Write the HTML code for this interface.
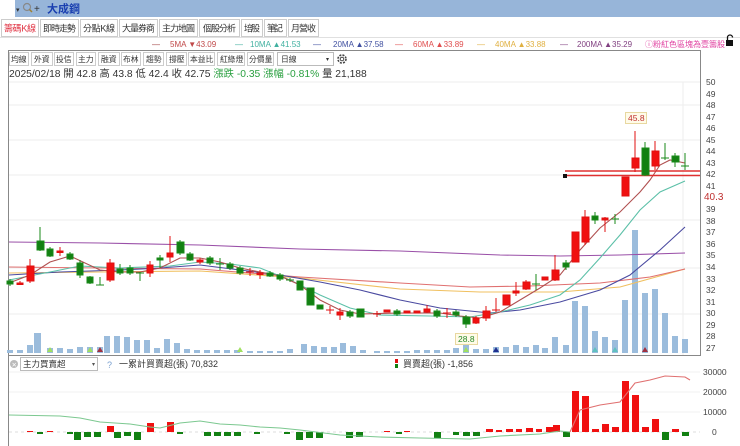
<!DOCTYPE html>
<html><head><meta charset="utf-8"><style>
html,body{margin:0;padding:0;background:#fff;width:740px;height:446px;overflow:hidden}
svg{display:block;font-family:"Liberation Sans","Noto Sans CJK TC",sans-serif}
</style></head><body>
<svg width="740" height="446" viewBox="0 0 740 446" xmlns="http://www.w3.org/2000/svg">
<rect x="0" y="0" width="740" height="17" fill="#97b5d9"/>
<rect x="0" y="0" width="15" height="17" fill="#fff"/>
<text x="16" y="12" font-size="7" fill="#333">▾</text>
<circle cx="27" cy="7" r="3.5" fill="none" stroke="#888" stroke-width="1.2"/>
<line x1="29.5" y1="9.5" x2="32" y2="12" stroke="#a08030" stroke-width="1.5"/>
<text x="34" y="12" font-size="10" fill="#333">+</text>
<text x="47" y="12.5" font-size="11" font-weight="bold" fill="#1a3fb0">大成鋼</text>
<g font-size="9" fill="#333">
<rect x="1.5" y="19.5" width="37" height="17" fill="#fff" stroke="#ccc"/><text x="4" y="31.5" fill="#e03040" textLength="32">籌碼K線</text>
<rect x="40.5" y="19.5" width="38" height="17" fill="#fff" stroke="#ccc"/><text x="43" y="31.5" textLength="33">即時走勢</text>
<rect x="80.5" y="19.5" width="37" height="17" fill="#fff" stroke="#ccc"/><text x="83" y="31.5" textLength="32">分點K線</text>
<rect x="119.5" y="19.5" width="38" height="17" fill="#fff" stroke="#ccc"/><text x="122" y="31.5" textLength="33">大量券商</text>
<rect x="159.5" y="19.5" width="38" height="17" fill="#fff" stroke="#ccc"/><text x="162" y="31.5" textLength="33">主力地圖</text>
<rect x="199.5" y="19.5" width="40" height="17" fill="#fff" stroke="#ccc"/><text x="203" y="31.5" textLength="33">個股分析</text>
<rect x="241.5" y="19.5" width="21" height="17" fill="#fff" stroke="#ccc"/><text x="244" y="31.5" textLength="16">培股</text>
<rect x="264.5" y="19.5" width="22" height="17" fill="#fff" stroke="#ccc"/><text x="267" y="31.5" textLength="16">筆記</text>
<rect x="288.5" y="19.5" width="30" height="17" fill="#fff" stroke="#ccc"/><text x="291" y="31.5" textLength="25">月營收</text>
</g>
<line x1="0" y1="37.5" x2="740" y2="37.5" stroke="#e0e0e0"/>
<g font-size="8">
<text x="152" y="47" fill="#a04040">—</text><text x="170" y="47" fill="#c04848">5MA ▼43.09</text>
<text x="235" y="47" fill="#40b0a0">—</text><text x="250" y="47" fill="#40b0a0">10MA ▲41.53</text>
<text x="313" y="47" fill="#4050a0">—</text><text x="333" y="47" fill="#4050a0">20MA ▲37.58</text>
<text x="395" y="47" fill="#e05050">—</text><text x="413" y="47" fill="#e05050">60MA ▲33.89</text>
<text x="477" y="47" fill="#e0b040">—</text><text x="495" y="47" fill="#e0b040">40MA ▲33.88</text>
<text x="560" y="47" fill="#804080">—</text><text x="577" y="47" fill="#804080">200MA ▲35.29</text>
<text x="645" y="47" fill="#e040a0">ⓘ粉紅色區塊為壹籌股</text>
</g>
<rect x="726" y="40" width="7" height="6" fill="#111"/><path d="M727.5 40 v-2.5 a2.5 2.5 0 0 1 5 0" fill="none" stroke="#111" stroke-width="1.3"/>
<rect x="8.5" y="50.5" width="692" height="305" fill="none" stroke="#888"/>
<g font-size="7.8" fill="#333">
<rect x="9.5" y="52.5" width="19" height="13" fill="#fff" stroke="#ccc"/><text x="11" y="62">均線</text>
<rect x="31.5" y="52.5" width="21" height="13" fill="#fff" stroke="#ccc"/><text x="34" y="62">外資</text>
<rect x="54.5" y="52.5" width="19" height="13" fill="#fff" stroke="#ccc"/><text x="56" y="62">投信</text>
<rect x="76.5" y="52.5" width="19" height="13" fill="#fff" stroke="#ccc"/><text x="78" y="62">主力</text>
<rect x="98.5" y="52.5" width="21" height="13" fill="#fff" stroke="#ccc"/><text x="101" y="62">融資</text>
<rect x="121.5" y="52.5" width="19" height="13" fill="#fff" stroke="#ccc"/><text x="123" y="62">布林</text>
<rect x="143.5" y="52.5" width="20" height="13" fill="#fff" stroke="#ccc"/><text x="146" y="62">趨勢</text>
<rect x="166.5" y="52.5" width="20" height="13" fill="#fff" stroke="#ccc"/><text x="169" y="62">撐壓</text>
<rect x="188.5" y="52.5" width="26" height="13" fill="#fff" stroke="#ccc"/><text x="190" y="62">本益比</text>
<rect x="217.5" y="52.5" width="27" height="13" fill="#fff" stroke="#ccc"/><text x="220" y="62">紅綠燈</text>
<rect x="247.5" y="52.5" width="26" height="13" fill="#fff" stroke="#ccc"/><text x="249" y="62">分價量</text>
<rect x="277.5" y="52.5" width="56" height="13" fill="#fff" stroke="#bbb"/><text x="281" y="62">日線</text><text x="326" y="61" font-size="6">▾</text>
</g>
<circle cx="342" cy="59" r="4" fill="none" stroke="#444" stroke-width="1.6" stroke-dasharray="2 1.2"/><circle cx="342" cy="59" r="1.8" fill="none" stroke="#444" stroke-width="1"/>
<text x="9" y="77" font-size="10.3" fill="#333">2025/02/18 開 42.8 高 43.8 低 42.4 收 42.75 <tspan fill="#2aa040">漲跌 -0.35  漲幅 -0.81%</tspan> 量 21,188</text>
<g stroke="#eee" stroke-width="1">
<line x1="9" y1="82" x2="700" y2="82"/><line x1="9" y1="105" x2="700" y2="105"/><line x1="9" y1="140" x2="700" y2="140"/><line x1="9" y1="175" x2="700" y2="175"/><line x1="9" y1="220" x2="700" y2="220"/><line x1="9" y1="268" x2="700" y2="268"/><line x1="9" y1="314" x2="700" y2="314"/>
<line x1="683" y1="82" x2="683" y2="355"/>
</g>
<g font-size="8.5" fill="#444">
<text x="706" y="85">50</text><text x="706" y="97">49</text><text x="706" y="108">48</text><text x="706" y="120">47</text><text x="706" y="131">46</text><text x="706" y="143">45</text><text x="706" y="154">44</text><text x="706" y="166">43</text><text x="706" y="177">42</text><text x="706" y="189">41</text><text x="706" y="212">39</text><text x="706" y="224">38</text><text x="706" y="235">37</text><text x="706" y="247">36</text><text x="706" y="258">35</text><text x="706" y="270">34</text><text x="706" y="282">33</text><text x="706" y="293">32</text><text x="706" y="305">31</text><text x="706" y="316">30</text><text x="706" y="328">29</text><text x="706" y="339">28</text><text x="706" y="351">27</text>
</g>
<text x="704" y="200" font-size="10" fill="#c03030">40.3</text>
<g fill="#9bbcdc">
<rect x="7" y="350" width="6" height="3"/><rect x="17" y="350" width="6" height="3"/><rect x="27" y="345" width="6" height="8"/><rect x="34" y="333" width="7" height="20"/><rect x="47" y="348" width="6" height="5"/><rect x="57" y="348" width="6" height="5"/><rect x="67" y="349" width="6" height="4"/><rect x="77" y="347" width="6" height="6"/><rect x="87" y="347" width="6" height="6"/><rect x="97" y="347" width="6" height="6"/><rect x="104" y="336" width="6" height="17"/><rect x="114" y="336" width="6" height="17"/><rect x="124" y="337" width="6" height="16"/><rect x="134" y="340" width="6" height="13"/><rect x="144" y="340" width="6" height="13"/><rect x="154" y="348" width="6" height="5"/><rect x="164" y="339" width="6" height="14"/><rect x="174" y="343" width="6" height="10"/><rect x="184" y="349" width="6" height="4"/><rect x="194" y="350" width="6" height="3"/><rect x="204" y="350" width="6" height="3"/><rect x="214" y="350" width="6" height="3"/><rect x="224" y="350" width="6" height="3"/><rect x="234" y="350" width="6" height="3"/><rect x="247" y="351" width="6" height="2"/><rect x="257" y="351" width="6" height="2"/><rect x="267" y="351" width="6" height="2"/><rect x="277" y="351" width="6" height="2"/><rect x="287" y="349" width="6" height="4"/><rect x="301" y="344" width="6" height="9"/><rect x="311" y="346" width="6" height="7"/><rect x="321" y="347" width="6" height="6"/><rect x="331" y="347" width="6" height="6"/><rect x="340" y="343" width="6" height="10"/><rect x="350" y="346" width="6" height="7"/><rect x="360" y="350" width="6" height="3"/>
<rect x="374" y="351" width="6" height="2"/><rect x="384" y="351" width="6" height="2"/><rect x="394" y="351" width="6" height="2"/><rect x="404" y="351" width="6" height="2"/><rect x="414" y="350" width="6" height="3"/><rect x="424" y="350" width="6" height="3"/><rect x="434" y="350" width="6" height="3"/><rect x="444" y="350" width="6" height="3"/><rect x="453" y="348" width="6" height="5"/><rect x="463" y="343" width="6" height="10"/><rect x="473" y="349" width="6" height="4"/><rect x="483" y="349" width="6" height="4"/><rect x="493" y="347" width="6" height="6"/><rect x="503" y="347" width="6" height="6"/><rect x="513" y="345" width="6" height="8"/><rect x="523" y="347" width="6" height="6"/><rect x="533" y="345" width="6" height="8"/><rect x="542" y="348" width="6" height="5"/><rect x="552" y="337" width="6" height="16"/><rect x="563" y="345" width="6" height="8"/><rect x="572" y="301" width="6" height="52"/><rect x="582" y="306" width="6" height="47"/><rect x="592" y="331" width="6" height="22"/><rect x="602" y="337" width="6" height="16"/><rect x="612" y="340" width="6" height="13"/><rect x="622" y="300" width="6" height="53"/><rect x="632" y="230" width="6" height="123"/><rect x="642" y="293" width="6" height="60"/><rect x="652" y="289" width="6" height="64"/><rect x="662" y="313" width="6" height="40"/><rect x="672" y="336" width="6" height="17"/><rect x="682" y="339" width="6" height="14"/>
</g>
<g>
<path d="M47 352l3-5 3 5z M87 352l3-5 3 5z" fill="#a0e060"/><path d="M97 352l3-5 3 5z" fill="#a03040"/><path d="M237 352l3-5 3 5z" fill="#a0e060"/><path d="M463 352l3-5 3 5z" fill="#a0e060"/><path d="M493 352l3-5 3 5z" fill="#203090"/><path d="M592 352l3-5 3 5z M612 352l3-5 3 5z" fill="#60c0c0"/><path d="M642 352l3-5 3 5z" fill="#a03040"/>
</g>
<g fill="none" stroke-width="1.1">
<polyline stroke="#9a50a8" points="9,242 100,243 200,245 300,249 400,251 500,255 560,256 620,255 685,253"/>
<polyline stroke="#f0c060" points="9,273 100,272 200,271 300,278 400,289 480,292 560,292 620,287 685,269"/>
<polyline stroke="#e07070" points="9,267 100,268 200,269 300,277 400,283 470,287 530,286 600,283 650,277 685,269"/>
<polyline stroke="#4a4aa0" points="9,275 60,272 120,270 160,268 200,265 240,270 280,275 320,282 360,290 400,300 440,308 490,313 520,310 560,302 600,290 630,275 660,250 685,227"/>
<polyline stroke="#5cc0a8" points="9,280 50,272 80,266 120,268 170,266 200,262 230,264 260,268 290,280 320,295 350,308 380,315 430,316 470,317 500,312 530,305 560,295 580,280 600,258 620,235 640,210 660,192 685,181"/>
<polyline stroke="#b05050" points="9,283 30,275 50,262 70,256 85,263 100,270 120,272 140,272 160,268 180,258 200,258 220,262 240,268 260,272 280,276 300,285 320,300 340,310 360,314 400,313 440,313 460,316 480,318 500,312 520,300 540,288 560,275 580,250 600,228 620,212 640,192 650,180 660,165 670,160 685,163"/>
</g>
<line x1="565" y1="171" x2="700" y2="171" stroke="#e03030" stroke-width="1.5"/>
<line x1="565" y1="175.5" x2="700" y2="175.5" stroke="#e03030" stroke-width="1.5"/>
<rect x="563" y="174" width="4" height="4" fill="#111"/>
<g stroke-width="1">
<g stroke="#1a8a1a" fill="#128012">
<line x1="10" y1="279" x2="10" y2="286"/><rect x="7" y="281" width="6" height="3"/>
<line x1="40" y1="227" x2="40" y2="251"/><rect x="37" y="241" width="7" height="9"/>
<line x1="50" y1="247" x2="50" y2="257"/><rect x="47" y="249" width="6" height="7"/>
<line x1="70" y1="252" x2="70" y2="260"/><rect x="67" y="254" width="6" height="5"/>
<line x1="80" y1="260" x2="80" y2="278"/><rect x="77" y="263" width="6" height="12"/>
<line x1="90" y1="276" x2="90" y2="284"/><rect x="87" y="277" width="6" height="6"/>
<line x1="100" y1="277" x2="100" y2="285"/><line x1="96" y1="285" x2="104" y2="285"/>
<line x1="120" y1="264" x2="120" y2="275"/><rect x="117" y="269" width="6" height="4"/>
<line x1="130" y1="265" x2="130" y2="275"/><rect x="127" y="268" width="6" height="5"/>
<line x1="140" y1="272" x2="140" y2="281"/><line x1="136" y1="273" x2="144" y2="273"/>
<line x1="160" y1="255" x2="160" y2="268"/><rect x="157" y="258" width="6" height="2"/>
<line x1="180" y1="240" x2="180" y2="255"/><rect x="177" y="242" width="7" height="11"/>
<line x1="190" y1="252" x2="190" y2="261"/><rect x="187" y="254" width="6" height="6"/>
<line x1="210" y1="256" x2="210" y2="265"/><rect x="207" y="258" width="6" height="5"/>
<line x1="220" y1="258" x2="220" y2="270"/><line x1="216" y1="264" x2="224" y2="264"/>
<line x1="230" y1="262" x2="230" y2="270"/><rect x="227" y="264" width="6" height="4"/>
<line x1="240" y1="266" x2="240" y2="275"/><rect x="237" y="268" width="6" height="5"/>
<line x1="270" y1="271" x2="270" y2="277"/><rect x="267" y="273" width="6" height="3"/>
<line x1="280" y1="273" x2="280" y2="281"/><rect x="277" y="275" width="6" height="4"/>
<line x1="290" y1="278" x2="290" y2="282"/><line x1="286" y1="280" x2="294" y2="280"/>
<rect x="297" y="281" width="6" height="9"/>
<rect x="307" y="288" width="7" height="17"/>
<rect x="317" y="305" width="6" height="4"/>
<line x1="350" y1="310" x2="350" y2="318"/><rect x="347" y="312" width="6" height="4"/>
<rect x="357" y="309" width="7" height="8"/>
<line x1="397" y1="309" x2="397" y2="316"/><rect x="394" y="311" width="6" height="3"/>
<line x1="437" y1="309" x2="437" y2="318"/><rect x="434" y="311" width="6" height="5"/>
<line x1="456" y1="310" x2="456" y2="317"/><rect x="453" y="312" width="6" height="3"/>
<line x1="466" y1="315" x2="466" y2="328"/><rect x="463" y="317" width="7" height="7"/>
<line x1="536" y1="274" x2="536" y2="290"/><line x1="532" y1="284" x2="540" y2="284"/>
<line x1="566" y1="260" x2="566" y2="270"/><rect x="563" y="263" width="6" height="4"/>
<line x1="595" y1="212" x2="595" y2="224"/><rect x="592" y="216" width="6" height="4"/>
<line x1="615" y1="214" x2="615" y2="224"/><line x1="611" y1="219" x2="619" y2="219"/>
<line x1="645" y1="142" x2="645" y2="176"/><rect x="642" y="148" width="7" height="27"/>
<line x1="665" y1="143" x2="665" y2="160"/><line x1="661" y1="158" x2="669" y2="158"/>
<line x1="675" y1="153" x2="675" y2="167"/><rect x="672" y="156" width="7" height="6"/>
<line x1="685" y1="153" x2="685" y2="170"/><line x1="681" y1="166" x2="689" y2="166"/>
</g>
<g stroke="#e01010" fill="#f01010">
<line x1="20" y1="281" x2="20" y2="285"/><rect x="17" y="283" width="6" height="1.5"/>
<line x1="30" y1="259" x2="30" y2="283"/><rect x="27" y="266" width="7" height="15"/>
<line x1="60" y1="247" x2="60" y2="256"/><rect x="57" y="251" width="6" height="1.5"/>
<line x1="110" y1="259" x2="110" y2="282"/><rect x="107" y="263" width="7" height="17"/>
<line x1="150" y1="261" x2="150" y2="277"/><rect x="147" y="265" width="6" height="8"/>
<line x1="170" y1="236" x2="170" y2="262"/><rect x="167" y="253" width="6" height="4"/>
<line x1="200" y1="258" x2="200" y2="264"/><rect x="197" y="260" width="6" height="2"/>
<line x1="250" y1="268" x2="250" y2="276"/><line x1="246" y1="272" x2="254" y2="272"/>
<line x1="260" y1="270" x2="260" y2="279"/><rect x="257" y="273" width="6" height="1.5"/>
<line x1="330" y1="306" x2="330" y2="314"/><line x1="326" y1="310" x2="334" y2="310"/>
<line x1="340" y1="308" x2="340" y2="320"/><rect x="337" y="312" width="6" height="3"/>
<line x1="377" y1="311" x2="377" y2="317"/><line x1="373" y1="314" x2="381" y2="314"/>
<rect x="384" y="310" width="6" height="2"/><rect x="404" y="311" width="6" height="2"/><rect x="414" y="311" width="6" height="2"/>
<line x1="427" y1="305" x2="427" y2="313"/><rect x="424" y="309" width="6" height="3"/>
<line x1="447" y1="308" x2="447" y2="318"/><line x1="443" y1="313" x2="451" y2="313"/>
<line x1="476" y1="316" x2="476" y2="324"/><rect x="473" y="318" width="6" height="5"/>
<line x1="486" y1="306" x2="486" y2="321"/><rect x="483" y="311" width="7" height="7"/>
<line x1="496" y1="298" x2="496" y2="312"/><line x1="492" y1="310" x2="500" y2="310"/>
<rect x="503" y="295" width="7" height="10"/>
<line x1="516" y1="282" x2="516" y2="296"/><rect x="513" y="291" width="6" height="2"/>
<line x1="526" y1="280" x2="526" y2="290"/><rect x="523" y="282" width="7" height="7"/>
<rect x="542" y="277" width="6" height="3"/>
<line x1="555" y1="255" x2="555" y2="281"/><rect x="552" y="270" width="7" height="10"/>
<rect x="572" y="232" width="7" height="30"/>
<line x1="585" y1="210" x2="585" y2="245"/><rect x="582" y="217" width="7" height="25"/>
<line x1="605" y1="217" x2="605" y2="232"/><rect x="602" y="218" width="6" height="2"/>
<rect x="622" y="177" width="7" height="19"/>
<line x1="635" y1="131" x2="635" y2="172"/><rect x="632" y="158" width="7" height="10"/>
<line x1="655" y1="141" x2="655" y2="170"/><rect x="652" y="151" width="7" height="15"/>
</g>
</g>
<rect x="625.5" y="112.5" width="21" height="11" fill="#fffbe8" stroke="#e8d8a0"/><text x="628" y="121" font-size="8.5" fill="#c03030">45.8</text>
<rect x="455.5" y="333.5" width="22" height="11" fill="#fffbe8" stroke="#e8d8a0"/><text x="458" y="342" font-size="8.5" fill="#2a8a2a">28.8</text>
<line x1="8.5" y1="355" x2="8.5" y2="446" stroke="#888"/>
<line x1="9" y1="372" x2="700" y2="372" stroke="#f0f0f0"/><line x1="9" y1="392" x2="700" y2="392" stroke="#f0f0f0"/><line x1="9" y1="412" x2="700" y2="412" stroke="#f0f0f0"/>
<line x1="9" y1="432" x2="700" y2="432" stroke="#ddd" stroke-dasharray="3 3"/>
<circle cx="14" cy="364" r="4" fill="#bbb"/><text x="11.5" y="367" font-size="6.5" fill="#fff">✕</text>
<rect x="20.5" y="357.5" width="77" height="13" fill="#fff" stroke="#bbb"/><text x="23" y="367" font-size="8.5" fill="#333">主力買賣超</text><text x="92" y="366" font-size="6" fill="#555">▾</text>
<text x="107" y="368" font-size="9" fill="#7aa0d0">?</text>
<text x="119" y="367" font-size="9" fill="#333">一累計買賣超(張) 70,832</text>
<rect x="395" y="359" width="3" height="4" fill="#e01010"/><rect x="395" y="364" width="3" height="4" fill="#128012"/>
<text x="403" y="367" font-size="9" fill="#333">買賣超(張) -1,856</text>
<g font-size="8.5" fill="#444"><text x="703" y="375">30000</text><text x="703" y="395">20000</text><text x="703" y="415">10000</text><text x="712" y="435">0</text></g>
<g fill="#f01010">
<rect x="27" y="431" width="6" height="1"/><rect x="47" y="431" width="6" height="1"/><rect x="107" y="426" width="7" height="6"/><rect x="147" y="423" width="7" height="9"/><rect x="167" y="422" width="7" height="10"/>
<rect x="384" y="431" width="6" height="1"/><rect x="404" y="431" width="6" height="1"/><rect x="486" y="429" width="7" height="3"/><rect x="496" y="430" width="6" height="2"/><rect x="506" y="429" width="7" height="3"/><rect x="516" y="429" width="6" height="3"/><rect x="526" y="428" width="7" height="4"/><rect x="536" y="429" width="6" height="3"/><rect x="546" y="427" width="7" height="5"/><rect x="553" y="425" width="7" height="7"/>
<rect x="572" y="391" width="7" height="41"/><rect x="582" y="396" width="7" height="36"/><rect x="592" y="429" width="7" height="3"/><rect x="602" y="424" width="7" height="8"/><rect x="612" y="427" width="7" height="5"/><rect x="622" y="381" width="7" height="51"/><rect x="632" y="395" width="7" height="37"/><rect x="642" y="427" width="7" height="5"/><rect x="652" y="419" width="7" height="13"/><rect x="672" y="429" width="7" height="3"/>
</g>
<g fill="#128012">
<rect x="37" y="432" width="6" height="2"/><rect x="67" y="432" width="6" height="2"/><rect x="74" y="432" width="7" height="8"/><rect x="84" y="432" width="7" height="5"/><rect x="94" y="432" width="7" height="5"/><rect x="114" y="432" width="7" height="6"/><rect x="124" y="432" width="7" height="4"/><rect x="134" y="432" width="7" height="8"/><rect x="177" y="432" width="6" height="2"/><rect x="204" y="432" width="7" height="4"/><rect x="214" y="432" width="7" height="4"/><rect x="224" y="432" width="7" height="4"/><rect x="234" y="432" width="7" height="4"/><rect x="254" y="432" width="6" height="2"/><rect x="284" y="432" width="6" height="2"/><rect x="296" y="432" width="7" height="8"/><rect x="306" y="432" width="7" height="6"/><rect x="316" y="432" width="7" height="6"/><rect x="346" y="432" width="7" height="6"/><rect x="356" y="432" width="7" height="5"/><rect x="396" y="432" width="6" height="2"/><rect x="434" y="432" width="7" height="6"/><rect x="453" y="432" width="6" height="3"/><rect x="463" y="432" width="7" height="4"/><rect x="473" y="432" width="7" height="4"/><rect x="563" y="432" width="7" height="5"/><rect x="662" y="432" width="7" height="8"/><rect x="682" y="432" width="7" height="4"/>
</g>
<polyline fill="none" stroke="#7cc890" stroke-width="1.1" points="9,415 60,416 80,418 100,422 130,424 150,427 160,428 180,423 200,421 220,424 240,425 260,427 280,428 300,430 340,435 380,437 420,438 470,439 500,436 540,434 560,431 570,432"/>
<polyline fill="none" stroke="#e07070" stroke-width="1.1" points="570,432 580,410 600,405 620,402 635,383 650,380 665,376 685,377 690,380"/>
</svg>
</body></html>
